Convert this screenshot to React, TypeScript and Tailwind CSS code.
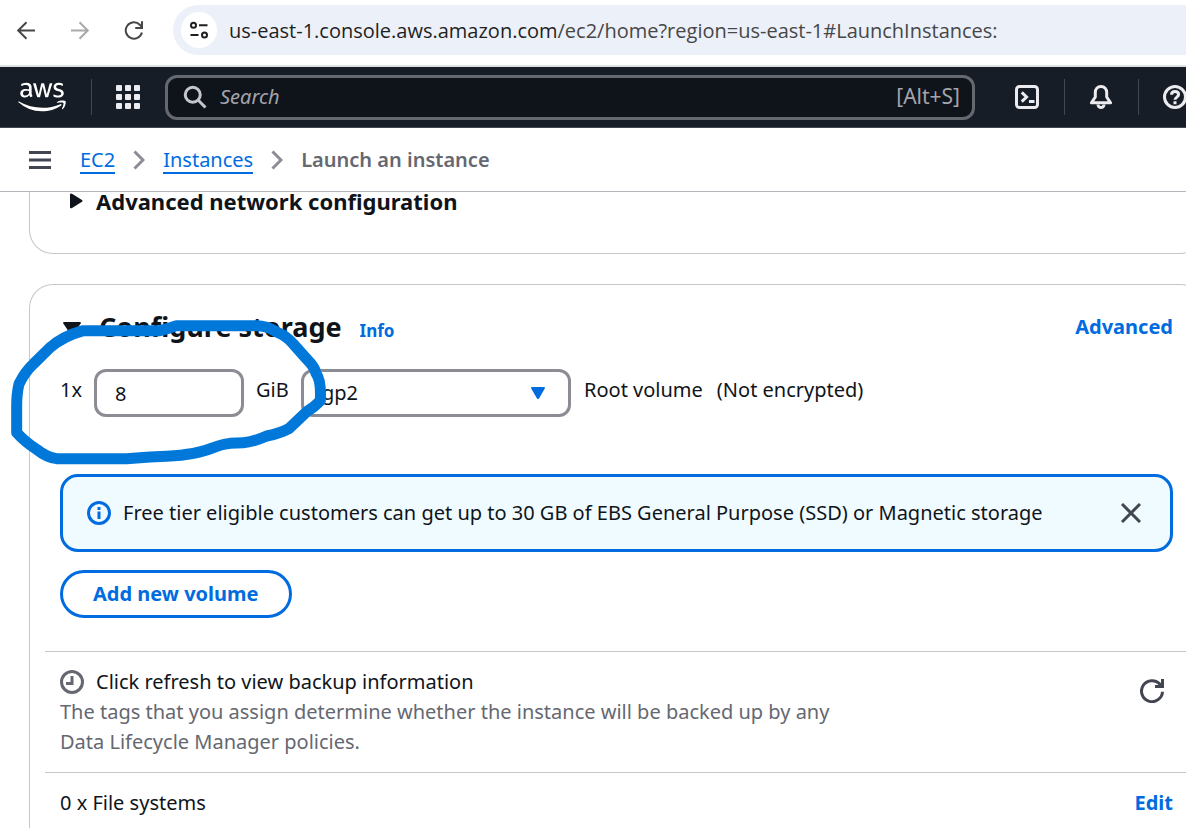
import type { ReactNode } from "react";
import { FaAws } from "react-icons/fa";

function Icon({ className, children }: { className: string; children: ReactNode }) {
  return (
    <svg
      viewBox="0 0 16 16"
      className={`shrink-0 ${className}`}
      fill="none"
      stroke="currentColor"
      strokeWidth="2"
      aria-hidden="true"
    >
      {children}
    </svg>
  );
}

function BrowserBar() {
  return (
    <header className="flex items-center border-b-2 border-[#dde3e3] bg-white pt-[5px] pb-[10px] pl-4">
      <button aria-label="Back" className="text-[#474747]">
        <svg viewBox="0 0 20 20" className="size-5" fill="none" stroke="currentColor" strokeWidth="2">
          <path d="M19 10.5H3M10.5 2.2 2.2 10.5l8.300 8.300" />
        </svg>
      </button>
      <button aria-label="Forward" className="ml-[34px] text-[#a9a9a9]">
        <svg viewBox="0 0 20 20" className="size-5" fill="none" stroke="currentColor" strokeWidth="2">
          <path d="M1 10.5h16M9.500 2.200l8.300 8.300-8.300 8.300" />
        </svg>
      </button>
      <button aria-label="Reload" className="ml-[34px] text-[#474747]">
        <svg viewBox="0 0 20 20" className="size-5" fill="none" stroke="currentColor" strokeWidth="2">
          <path d="M17.900 12.500A8.200 8.200 0 1 1 15.800 4.700L17.800 7.200M18 1.200v6.800h-6.800" />
        </svg>
      </button>
      <div className="ml-[29px] flex h-[50px] min-w-0 flex-1 items-center gap-3 rounded-l-full bg-[#ecf0f9] pl-2">
        <button aria-label="View site information" className="flex size-9 shrink-0 items-center justify-center rounded-full bg-white text-[#1f1f1f]">
          <svg viewBox="0 0 20 20" className="size-5" fill="none" stroke="currentColor" strokeWidth="2">
            <circle cx="4.500" cy="5.200" r="2.500" />
            <path d="M10 5.200h8.500M1.500 15h8" />
            <circle cx="15.500" cy="15" r="2.500" />
          </svg>
        </button>
        <div className="pt-0.5 font-['Open_Sans',sans-serif] text-[20px] whitespace-nowrap text-[#474747]">
          <span className="text-[#1f1f1f]">us-east-1.console.aws.amazon.com</span>
          /ec2/home?region=us-east-1#LaunchInstances:
        </div>
      </div>
    </header>
  );
}

function Separator() {
  return <span className="h-9 w-px shrink-0 bg-[#424650]" />;
}

function ConsoleNav() {
  return (
    <nav className="flex h-[61px] shrink-0 items-center overflow-hidden border-b border-[#424650] bg-[#161d26] pl-[18px] text-[#ebebf0]">
      <a href="#home" aria-label="AWS home" className="shrink-0 text-white">
        <FaAws className="h-[38px] w-12" />
      </a>
      <span className="w-[25px] shrink-0" />
      <Separator />
      <button aria-label="Services" className="ml-6 shrink-0">
        <svg viewBox="0 0 24 24" className="size-6" fill="currentColor">
          {[0, 9, 18].map((y) =>
            [0, 9, 18].map((x) => <rect key={`${x}-${y}`} x={x} y={y} width="6" height="6" rx="1" />),
          )}
        </svg>
      </button>
      <label className="ml-[25px] flex h-[45px] min-w-0 flex-1 items-center gap-[13px] rounded-xl border-3 border-[#656871] bg-[#0f141a] pr-3 pl-[15px]">
        <Icon className="size-6 text-[#c6c6cd]">
          <circle cx="6.500" cy="6.500" r="5" />
          <path d="m10.200 10.200 4.800 4.800" />
        </Icon>
        <input
          type="text"
          aria-label="Search"
          placeholder="Search"
          className="min-w-0 flex-1 bg-transparent text-[20px] outline-none placeholder:text-[#a4a4ad] placeholder:italic"
        />
        <span className="text-[21px] text-[#a4a4ad]">[Alt+S]</span>
      </label>
      <div className="-mr-px ml-10 flex shrink-0 items-center">
        <button aria-label="CloudShell">
          <Icon className="size-6">
            <rect x="1" y="1" width="14" height="14" rx="2" />
            <path d="m4.500 4.900 3.200 3.100-3.200 3.100M9.300 11H13" />
          </Icon>
        </button>
        <span className="w-[25px]" />
        <Separator />
        <button aria-label="Notifications" className="ml-6">
          <Icon className="size-6">
            <path d="M8 1C5.600 1 4.200 2.700 4.200 5v3L1.600 11.900h12.800L11.800 8V5C11.800 2.700 10.400 1 8 1Z" strokeLinejoin="round" />
            <path d="M6 13a2 2 0 0 0 4 0" />
          </Icon>
        </button>
        <span className="w-[25px]" />
        <Separator />
        <button aria-label="Help" className="ml-6">
          <Icon className="size-6">
            <circle cx="8" cy="8" r="7" />
            <path d="M5.700 6.500C5.700 5.100 6.600 4.400 8 4.400s2.400.8 2.400 2c0 1.700-2.400 1.700-2.400 3.500M8 10.800v2" />
          </Icon>
        </button>
      </div>
    </nav>
  );
}

function Chevron() {
  return (
    <svg viewBox="0 0 12 20" className="h-5 w-3" fill="none" stroke="#8c8c94" strokeWidth="3" aria-hidden="true">
      <path d="m1.500 1.500 8.500 8.500-8.500 8.500" />
    </svg>
  );
}

function Breadcrumbs() {
  return (
    <div className="flex h-16 shrink-0 items-center border-b border-[#b4b4bb] bg-white pl-[29px] text-[20px]">
      <button aria-label="Open navigation" className="mr-[29px]">
        <svg viewBox="0 0 22 18" className="h-[18px] w-[22px]" fill="#424650">
          <rect width="22" height="3" />
          <rect y="7.500" width="22" height="3" />
          <rect y="15" width="22" height="3" />
        </svg>
      </button>
      <nav aria-label="Breadcrumbs" className="flex items-center gap-[18px] whitespace-nowrap">
        <a href="#ec2" className="border-b-2 border-[#006ce0] pt-0.5 leading-6 text-[#006ce0]">EC2</a>
        <Chevron />
        <a href="#instances" className="border-b-2 border-[#006ce0] pt-0.5 leading-6 text-[#006ce0]">Instances</a>
        <Chevron />
        <span className="font-semibold text-[#656871]">Launch an instance</span>
      </nav>
    </div>
  );
}

function Storage() {
  return (
    <section className="-mr-[18px] mt-[30px] flex-1 rounded-t-3xl border border-b-0 border-[#c6c6cd] pt-6">
      <div className="px-[30px]">
        <div className="flex items-center justify-between">
          <div className="flex items-baseline pl-0.5">
            <button aria-label="Toggle storage section" className="mr-[17px]">
              <svg viewBox="0 0 20 16" className="h-4 w-5" fill="#0f141a">
                <path d="M2 1h16q1.500.2.700 1.500l-7.700 11.500q-1 1-2 0L1.300 2.500Q.5 1.200 2 1Z" />
              </svg>
            </button>
            <h2 className="text-[27px] leading-9 font-bold">Configure storage</h2>
            <a href="#info" className="ml-[18px] text-[17px] font-bold text-[#006ce0]">Info</a>
          </div>
          <a href="#advanced" className="text-[20px] font-bold text-[#006ce0]">Advanced</a>
        </div>

        <div className="mt-6 flex items-start text-[20px] leading-[42px] whitespace-nowrap">
          <label htmlFor="size" className="w-[34px]">1x</label>
          <input
            id="size"
            type="text"
            defaultValue="8"
            className="h-12 w-[150px] rounded-xl border-3 border-[#8c8c94] bg-white px-[18px] text-[20px]"
          />
          <label htmlFor="type" className="ml-3 w-[45px]">GiB</label>
          <div className="relative">
            <select
              id="type"
              defaultValue="gp2"
              className="h-12 w-[270px] appearance-none rounded-xl border-3 border-[#8c8c94] bg-white px-[18px] text-[20px]"
            >
              <option>gp2</option>
              <option>gp3</option>
            </select>
            <svg viewBox="0 0 16 14" className="pointer-events-none absolute top-[17px] right-[25px] h-[14px] w-4" fill="#006ce0">
              <path d="M2 1h12q1.600.2.800 1.500L9 12.500q-1 1.200-2 0L1.200 2.500Q.4 1.200 2 1Z" />
            </svg>
          </div>
          <span className="ml-[13px]">Root volume</span>
          <span className="ml-[14px]">(Not encrypted)</span>
        </div>

        <div className="mt-[57px] flex h-[78px] items-center rounded-[18px] border-3 border-[#006ce0] bg-[#f0fbff] pr-[29px] pl-6 text-[20px]">
          <Icon className="size-6 text-[#006ce0]">
            <circle cx="8" cy="8" r="7" />
            <path d="M8 4v2M8 7v5" />
          </Icon>
          <p className="ml-3 flex-1">
            Free tier eligible customers can get up to 30 GB of EBS General Purpose (SSD) or Magnetic storage
          </p>
          <button aria-label="Dismiss" className="text-[#424650]">
            <svg viewBox="0 0 20 20" className="size-5" fill="none" stroke="currentColor" strokeWidth="3">
              <path d="m1 1 18 18M19 1 1 19" />
            </svg>
          </button>
        </div>

        <button className="mt-[18px] h-12 rounded-full border-3 border-[#006ce0] px-[30px] text-[20px] font-bold text-[#006ce0]">
          Add new volume
        </button>
      </div>

      <div className="ml-[15px] mt-[33px] flex items-start justify-between border-t border-[#c6c6cd] py-[15px] pr-[39px] pl-[15px] text-[20px] leading-[30px]">
        <div>
          <p className="flex items-center gap-3">
            <Icon className="size-6 text-[#656871]">
              <circle cx="8" cy="8" r="7" />
              <path d="M8 4v5H4" />
            </Icon>
            Click refresh to view backup information
          </p>
          <p className="max-w-[800px] text-[#656871]">
            The tags that you assign determine whether the instance will be backed up by any Data Lifecycle Manager policies.
          </p>
        </div>
        <button aria-label="Refresh" className="mt-3 text-[#424650]">
          <Icon className="size-6">
            <path d="M15 8.500A7 7 0 1 1 13.300 3.500L14.800 5M15 0v5h-5" />
          </Icon>
        </button>
      </div>

      <div className="ml-[15px] flex items-center justify-between border-t border-[#c6c6cd] py-[15px] pr-[30px] pl-[15px] text-[20px] leading-[30px]">
        <span>0 x File systems</span>
        <a href="#edit" className="font-bold text-[#006ce0]">Edit</a>
      </div>
    </section>
  );
}

function HighlightStroke() {
  return (
    <svg
      viewBox="0 402 999 468"
      className="pointer-events-none absolute top-[122px] left-0 h-[156px] w-[333px]"
      fill="none"
      stroke="#0078d9"
      strokeWidth="33"
      strokeLinejoin="round"
      strokeLinecap="round"
      aria-hidden="true"
    >
      <path d="M250 452H480Q505 446 530 437H770Q800 437 830 456Q860 468 880 492L920 537Q945 562 948 580Q964 600 961 662Q945 680 920 695L868 745Q840 760 800 768Q760 786 730 788L690 790Q660 794 640 803Q590 824 500 829L450 831L380 836H170Q140 832 110 808Q75 786 50 758V680Q50 640 57 612Q75 575 100 552L150 503Q190 468 250 452Z" />
    </svg>
  );
}

export default function App() {
  return (
    <div className="flex h-screen flex-col overflow-hidden bg-white font-['Noto_Sans',sans-serif] text-[#0f141a]">
      <BrowserBar />
      <ConsoleNav />
      <Breadcrumbs />
      <main className="relative flex flex-1 flex-col overflow-hidden pl-[29px]">
        <section className="-mr-[18px] rounded-b-3xl border border-t-0 border-[#c6c6cd] px-10 pb-[43px]">
          <button className="flex items-center text-[22px] leading-[18px] font-bold whitespace-nowrap">
            <svg viewBox="0 0 13 16" className="mr-[13px] h-4 w-[13px]" fill="#0f141a" aria-hidden="true">
              <path d="M0 1.500Q.3-.2 2 .8l10 6.200q1 .9 0 1.800l-10 6.200q-1.700 1-2-.7Z" />
            </svg>
            Advanced network configuration
          </button>
        </section>
        <Storage />
        <HighlightStroke />
      </main>
    </div>
  );
}
